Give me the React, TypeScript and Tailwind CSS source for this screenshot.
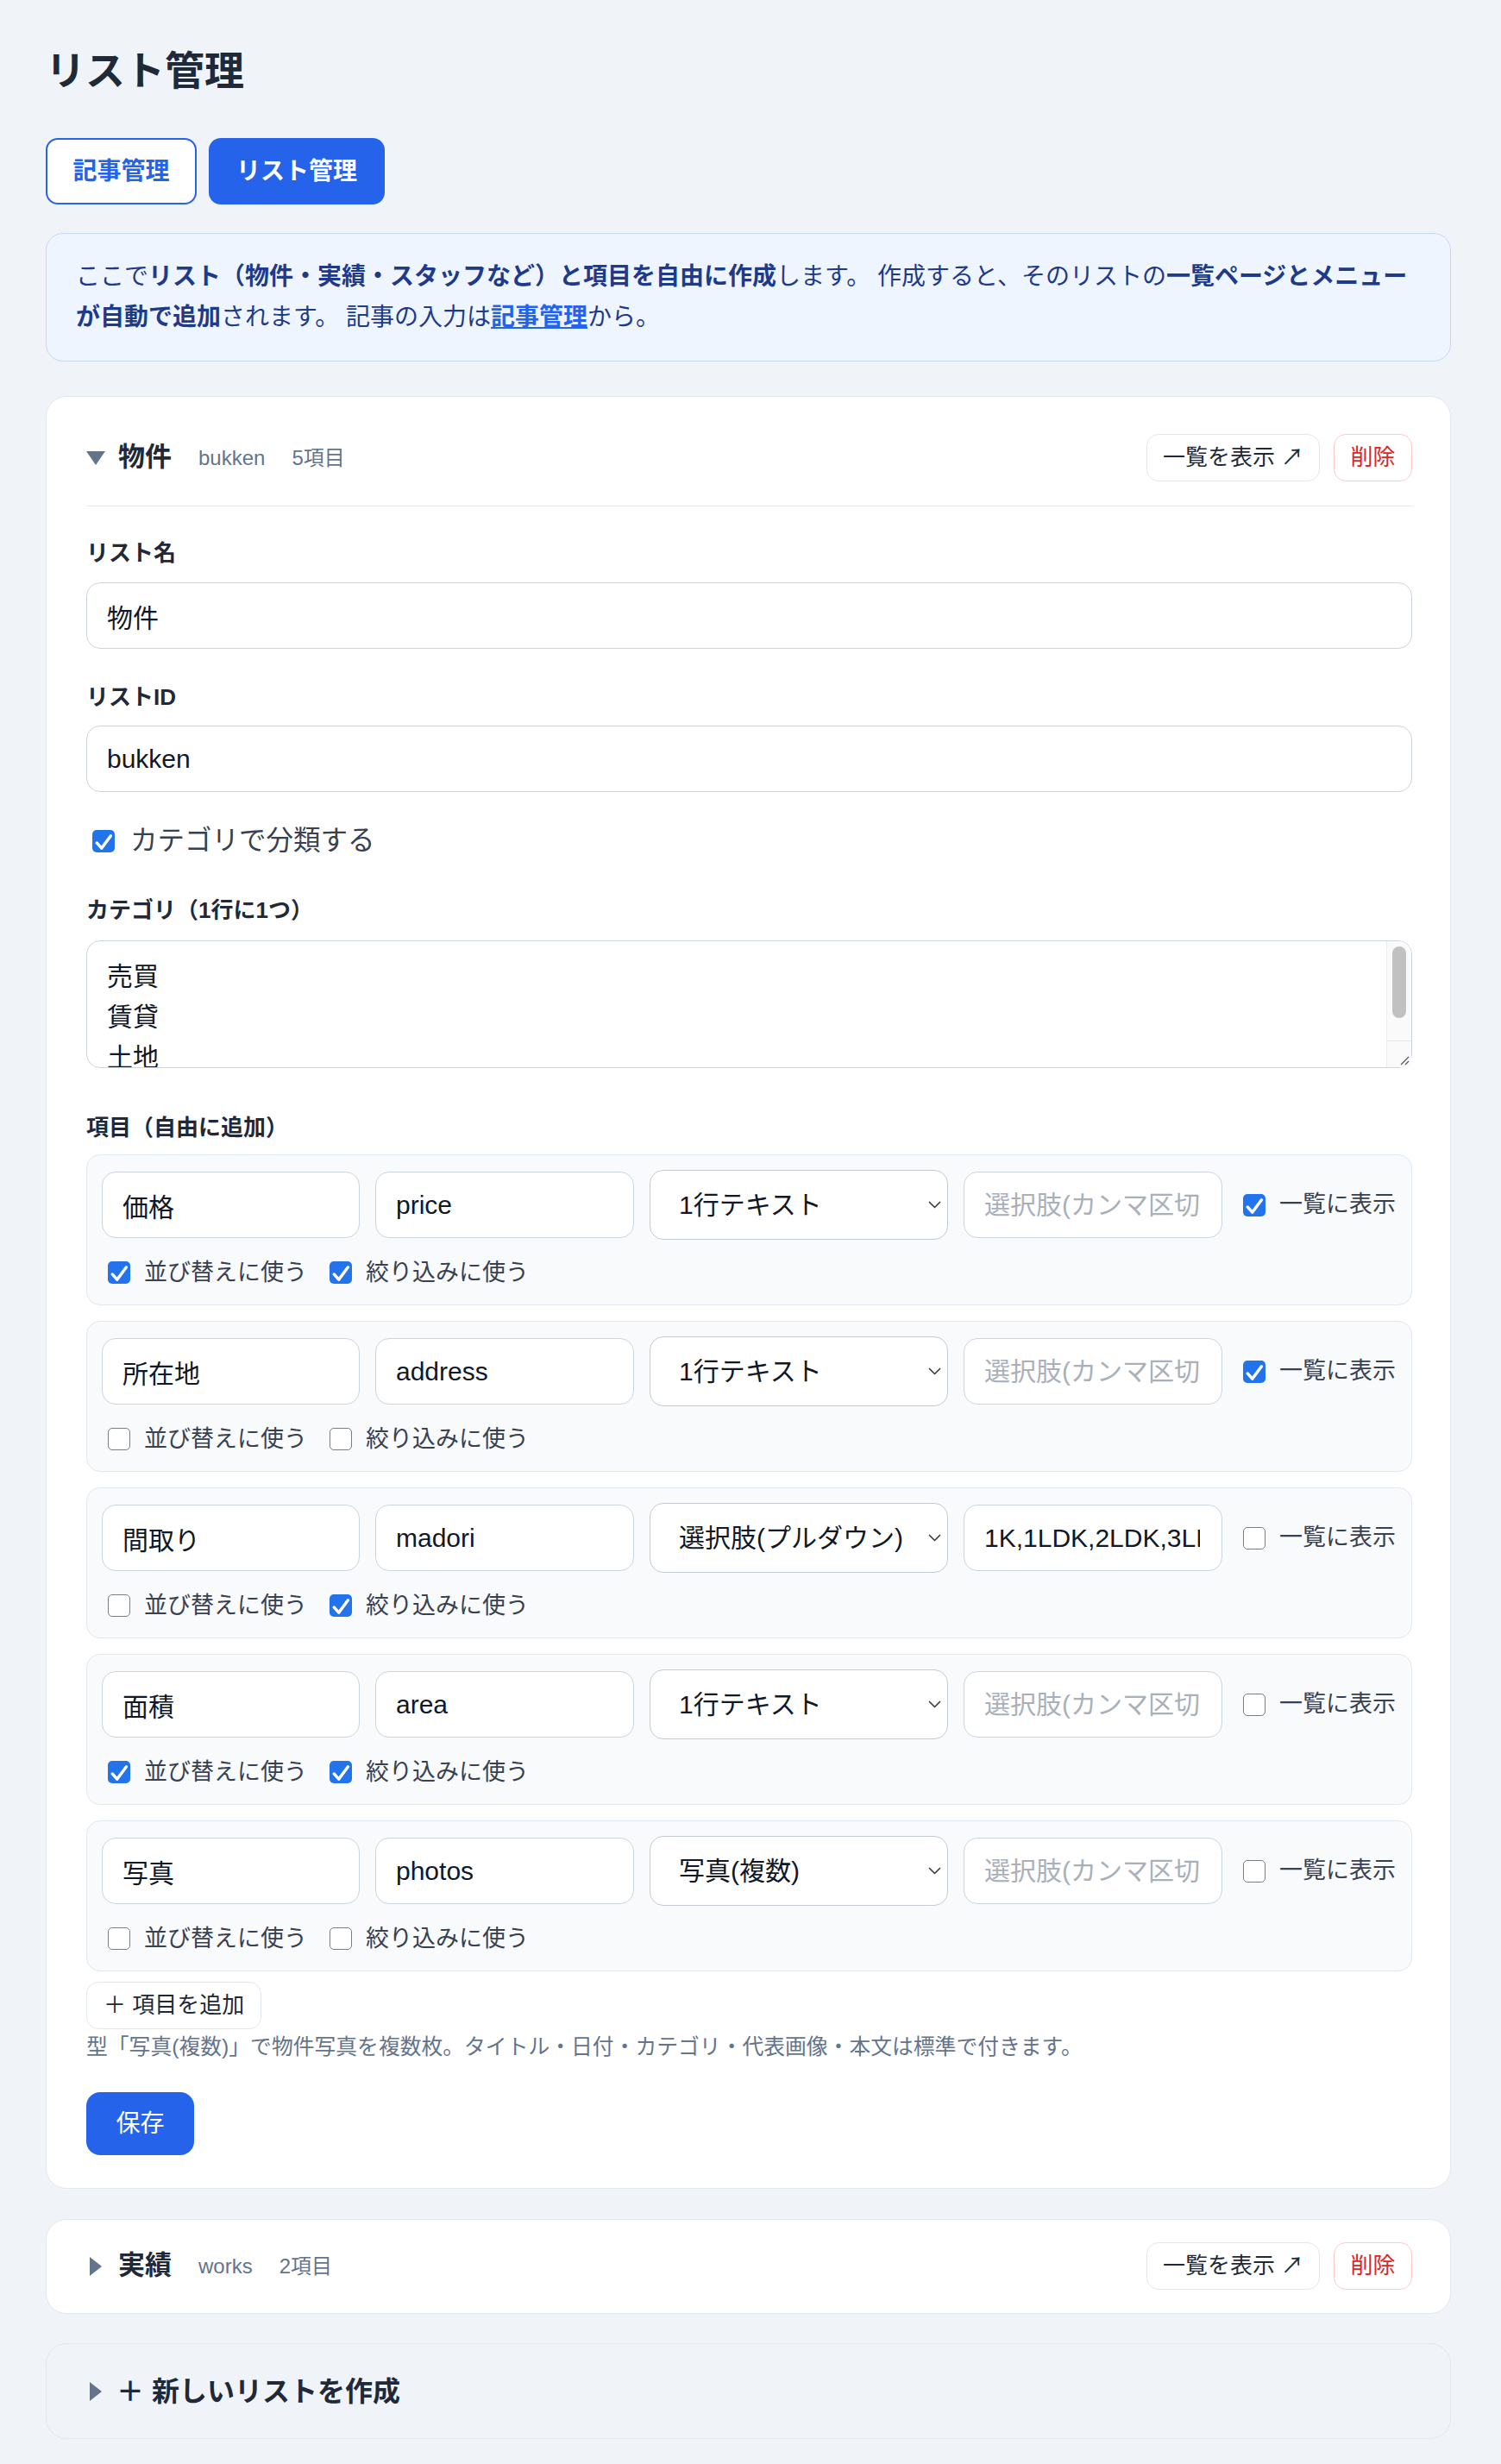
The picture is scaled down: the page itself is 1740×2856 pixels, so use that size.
import { useState } from "react";

type Field = {
  label: string;
  key: string;
  type: string;
  choices: string;
  list: boolean;
  sort: boolean;
  filter: boolean;
};

const FIELDS: Field[] = [
  { label: "価格", key: "price", type: "1行テキスト", choices: "", list: true, sort: true, filter: true },
  { label: "所在地", key: "address", type: "1行テキスト", choices: "", list: true, sort: false, filter: false },
  { label: "間取り", key: "madori", type: "選択肢(プルダウン)", choices: "1K,1LDK,2LDK,3LDK,4LDK", list: false, sort: false, filter: true },
  { label: "面積", key: "area", type: "1行テキスト", choices: "", list: false, sort: true, filter: true },
  { label: "写真", key: "photos", type: "写真(複数)", choices: "", list: false, sort: false, filter: false },
];

const TYPES = ["1行テキスト", "複数行テキスト", "数値", "日付", "選択肢(プルダウン)", "写真(複数)"];

const inputCls =
  "h-[77px] rounded-[16px] border border-[#cbd5e1] bg-white pl-[23px] text-[30px] text-[#111827] outline-none placeholder:text-[#a9b0ba]";

function Checkbox({ checked }: { checked: boolean }) {
  const [on, setOn] = useState(checked);
  return (
    <span
      onClick={() => setOn(!on)}
      className={`flex h-[26px] w-[26px] shrink-0 items-center justify-center rounded-[5px] ${
        on ? "bg-[#2373ec]" : "border-[1.5px] border-[#7d7d7d] bg-white"
      }`}
    >
      {on && (
        <svg viewBox="0 0 16 16" className="h-full w-full" fill="none" stroke="white" strokeWidth={2.1} strokeLinecap="round" strokeLinejoin="round">
          <path d="M3.2 9.2l3.4 3.8L13.2 4.2" />
        </svg>
      )}
    </span>
  );
}

function Marker({ open }: { open: boolean }) {
  return (
    <span className="flex w-[22px] shrink-0 items-center justify-center">
      {open ? (
        <svg width="22" height="16" viewBox="0 0 22 16">
          <path d="M0 0h22L11 16z" fill="#64748b" />
        </svg>
      ) : (
        <svg width="14" height="22" viewBox="0 0 14 22">
          <path d="M0 0l14 11L0 22z" fill="#64748b" />
        </svg>
      )}
    </span>
  );
}

function ListHeader({ name, slug, count, open }: { name: string; slug: string; count: number; open: boolean }) {
  return (
    <div className="flex h-[55px] items-center justify-between">
      <div className="flex items-center">
        <Marker open={open} />
        <span className="ml-[15px] text-[31px] font-bold text-[#1f2937]">{name}</span>
        <span className="ml-[31px] text-[24px] text-[#64748b]">{slug}</span>
        <span className="ml-[31px] text-[24px] text-[#64748b]">{count}項目</span>
      </div>
      <div className="flex gap-[16px]">
        <button className="h-[55px] w-[201px] rounded-[14px] border border-[#e2e8f0] bg-white text-[26px] text-[#1f2937]">
          一覧を表示 ↗
        </button>
        <button className="h-[55px] w-[91px] rounded-[14px] border border-[#fecaca] bg-white text-[26px] text-[#dc2626]">
          削除
        </button>
      </div>
    </div>
  );
}

function FieldRow({ f }: { f: Field }) {
  return (
    <div className="rounded-[16px] border border-[#e2e8f0] bg-[#f8fafc] pb-[17px] pl-[17px] pr-[15px] pt-[17px]">
      <div className="flex h-[81px] items-center gap-[18px]">
        <input className={`${inputCls} w-[299px] pr-[16px]`} defaultValue={f.label} />
        <input className={`${inputCls} w-[300px] pr-[16px]`} defaultValue={f.key} />
        <div className="relative w-[346px]">
          <select
            defaultValue={f.type}
            className="h-[81px] w-full appearance-none rounded-[16px] border border-[#c4cad3] bg-white pl-[33px] text-[30px] text-[#111827] outline-none"
          >
            {TYPES.map((t) => (
              <option key={t}>{t}</option>
            ))}
          </select>
          <svg
            className="pointer-events-none absolute right-[8px] top-[36px]"
            width="15"
            height="9"
            viewBox="0 0 15 9"
            fill="none"
            stroke="#333"
            strokeWidth={1.5}
          >
            <path d="M1 1l6.5 6.5L14 1" />
          </svg>
        </div>
        <input className={`${inputCls} w-[300px] pr-[25px]`} defaultValue={f.choices} placeholder="選択肢(カンマ区切り)" />
        <label className="ml-[6px] flex items-center gap-[16px] text-[27px] text-[#374151]">
          <Checkbox checked={f.list} />
          一覧に表示
        </label>
      </div>
      <div className="ml-[7px] mt-[18px] flex h-[40px] items-center gap-[26px] text-[27px] text-[#374151]">
        <label className="flex items-center gap-[16px]">
          <Checkbox checked={f.sort} />
          並び替えに使う
        </label>
        <label className="flex items-center gap-[16px]">
          <Checkbox checked={f.filter} />
          絞り込みに使う
        </label>
      </div>
    </div>
  );
}

export default function App() {
  return (
    <div className="min-h-screen bg-[#f0f4f8] pb-[28px] pl-[53px] pr-[58px] pt-[52px] font-['Liberation_Sans','Noto_Sans_CJK_JP',sans-serif] text-[#1f2937]">
      <h1 className="text-[46px] font-bold leading-[60px] text-[#1f2937]">リスト管理</h1>

      <div className="mt-[48px] flex gap-[14px]">
        <button className="h-[77px] w-[175px] rounded-[14px] border-2 border-[#2563eb] bg-white text-[28px] font-bold text-[#2563eb]">
          記事管理
        </button>
        <button className="h-[77px] w-[204px] rounded-[14px] bg-[#2563eb] text-[28px] font-bold text-white">
          リスト管理
        </button>
      </div>

      <div className="mt-[33px] rounded-[20px] border border-[#c3d9f7] bg-[#eef5ff] pb-[27px] pl-[34px] pr-[34px] pt-[26px] text-[28px] leading-[47px] text-[#1e3a8a]">
        ここで<b>リスト（物件・実績・スタッフなど）と項目を自由に作成</b>します。 作成すると、そのリストの
        <b>一覧ページとメニュー</b>
        <br />
        <b>が自動で追加</b>されます。 記事の入力は
        <a className="font-bold text-[#2563eb] underline">記事管理</a>から。
      </div>

      <section className="mt-[40px] rounded-[24px] border border-[#e2e8f0] bg-white pb-[38px] pl-[46px] pr-[44px] pt-[43px]">
        <div className="border-b border-[#e5e7eb] pb-[28px]">
          <ListHeader name="物件" slug="bukken" count={5} open />
        </div>

        <div className="mt-[36px] text-[26px] font-bold leading-[36px]">リスト名</div>
        <input className={`${inputCls} mt-[16px] block h-[76px] w-full pr-[16px]`} defaultValue="物件" />

        <div className="mt-[38px] text-[26px] font-bold leading-[36px]">リストID</div>
        <input className={`${inputCls} mt-[15px] block h-[76px] w-full pr-[16px]`} defaultValue="bukken" />

        <label className="ml-[7px] mt-[35px] flex h-[44px] items-center gap-[18px] text-[31.5px] text-[#374151]">
          <Checkbox checked />
          カテゴリで分類する
        </label>

        <div className="mt-[40px] text-[26px] font-bold leading-[36px]">カテゴリ（1行に1つ）</div>
        <div className="relative mt-[17px]">
          <textarea
            className="block h-[148px] w-full resize-y overflow-hidden rounded-[16px] border border-[#cbd5e1] bg-white pl-[23px] pr-[40px] pt-[17px] text-[30px] leading-[47px] text-[#111827] outline-none"
            defaultValue={"売買\n賃貸\n土地\n"}
          />
          {/* scrollbar track, thumb and resizer box */}
          <div className="pointer-events-none absolute bottom-[1px] right-[1px] top-[1px] flex w-[29px] flex-col rounded-tr-[15px] border-l border-[#ececec] bg-[#fafafa]">
            <div className="flex-1 px-[6px] pt-[6px]">
              <div className="h-[83px] rounded-full bg-[#c1c1c1]" />
            </div>
            <div className="h-[31px] border-t border-[#e6e6e6]" />
          </div>
          <svg className="pointer-events-none absolute bottom-[3px] right-[3px]" width="12" height="12" viewBox="0 0 12 12" stroke="#555" strokeWidth={1.2}>
            <path d="M11 2L2 11M11 7L7 11" />
          </svg>
        </div>

        <div className="mt-[51px] text-[26px] font-bold leading-[36px]">項目（自由に追加）</div>
        <div className="mt-[13px] flex flex-col gap-[18px]">
          {FIELDS.map((f) => (
            <FieldRow key={f.key} f={f} />
          ))}
        </div>

        <button className="mt-[12px] h-[55px] rounded-[14px] border border-[#e2e8f0] bg-white px-[19px] text-[26px] text-[#1f2937]">
          ＋ 項目を追加
        </button>
        <p className="mt-[5px] text-[24.8px] leading-[32px] text-[#64748b]">
          型「写真(複数)」で物件写真を複数枚。タイトル・日付・カテゴリ・代表画像・本文は標準で付きます。
        </p>

        <button className="mt-[36px] block h-[73px] w-[125px] rounded-[16px] bg-[#2563eb] text-[28px] text-white">
          保存
        </button>
      </section>

      <section className="mt-[35px] rounded-[24px] border border-[#e2e8f0] bg-white pb-[27px] pl-[46px] pr-[44px] pt-[26px]">
        <ListHeader name="実績" slug="works" count={2} open={false} />
      </section>

      <section className="mt-[34px] rounded-[24px] border border-[#e2e8f0] bg-[#f0f4f8] pb-[27px] pl-[46px] pr-[44px] pt-[27px]">
        <div className="flex h-[55px] items-center">
          <Marker open={false} />
          <span className="ml-[13px] text-[32px] font-bold text-[#1f2937]">＋ 新しいリストを作成</span>
        </div>
      </section>
    </div>
  );
}
